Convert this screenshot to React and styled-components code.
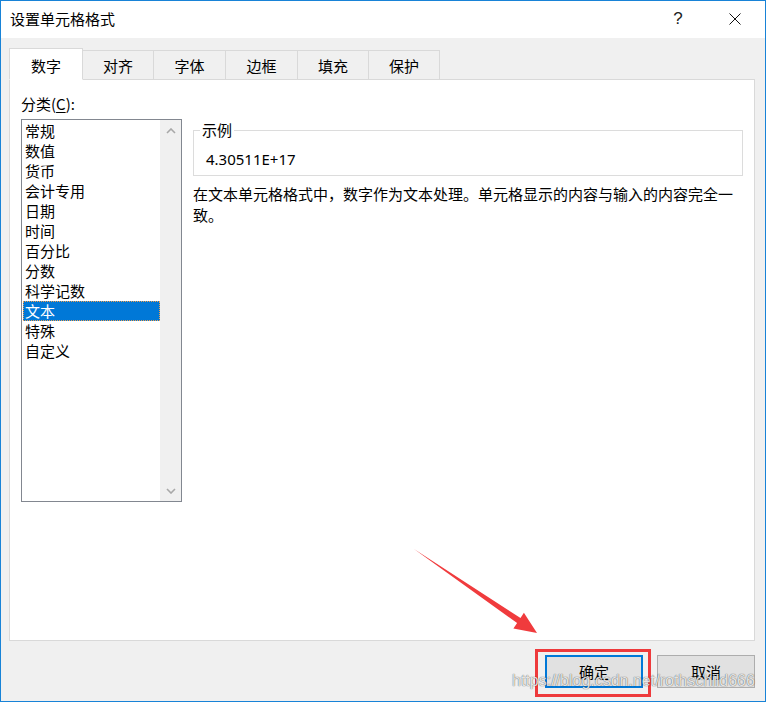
import React from 'react';
import styled, { createGlobalStyle } from 'styled-components';

const FONT = `"Noto Sans CJK SC", "Noto Sans", sans-serif`;
const LATIN_FONT = `"Noto Sans", "Noto Sans CJK SC", sans-serif`;

const GlobalStyle = createGlobalStyle`
  html, body { margin: 0; padding: 0; background: #fff; }
  body { font-family: ${FONT}; }
  * { box-sizing: border-box; }
`;

const Window = styled.div`
  position: relative;
  width: 766px;
  height: 702px;
  border: 1px solid #1883d7;
  background: #f0f0f0;
  display: flex;
  flex-direction: column;
  font-family: ${FONT};
  font-size: 15px;
  color: #000;
  overflow: hidden;
`;

const TitleBar = styled.div`
  height: 37px;
  flex: none;
  background: #fff;
  display: flex;
  align-items: center;
  padding: 0 7px 2px 9px;
`;

const Title = styled.div`
  flex: 1;
  line-height: 20px;
`;

const TitleButtons = styled.div`
  display: flex;
  gap: 11px;
  align-items: center;
`;

const TitleButton = styled.div`
  width: 46px;
  height: 30px;
  display: flex;
  align-items: center;
  justify-content: center;
  font-family: "Liberation Sans", sans-serif;
  font-size: 17px;
  color: #222;
`;

const Body = styled.div`
  flex: 1;
  display: flex;
  flex-direction: column;
  padding: 11px 10px 0 8px;
`;

const TabStrip = styled.div`
  display: flex;
  align-items: flex-end;
  height: 31px;
  margin-bottom: -1px;
  position: relative;
  z-index: 1;
`;

const Tab = styled.div`
  width: ${p => p.$w}px;
  height: ${p => (p.$active ? 32 : 30)}px;
  margin-left: ${p => (p.$first ? 0 : -1)}px;
  border: 1px solid #d9d9d9;
  border-bottom-color: ${p => (p.$active ? '#fff' : '#d9d9d9')};
  background: ${p => (p.$active ? '#fff' : '#f0f0f0')};
  display: flex;
  align-items: center;
  justify-content: center;
  line-height: 20px;
  padding-top: ${p => (p.$active ? 3 : 1)}px;
  position: relative;
  z-index: ${p => (p.$active ? 2 : 1)};
`;

const Panel = styled.div`
  height: 562px;
  flex: none;
  background: #fff;
  border: 1px solid #d9d9d9;
  padding: 14px 11px 0 11px;
  display: grid;
  grid-template-columns: 161px 1fr;
  column-gap: 11px;
  align-items: start;
`;

const LeftCol = styled.div`
  display: flex;
  flex-direction: column;
`;

const FieldLabel = styled.div`
  line-height: 20px;
  height: 20px;
  margin-bottom: 5px;
`;

const Mnemonic = styled.span`
  text-decoration: underline;
  text-underline-offset: 2px;
`;

const ListBox = styled.div`
  height: 383px;
  border: 1px solid #828790;
  display: flex;
`;

const Items = styled.div`
  flex: 1;
  display: flex;
  flex-direction: column;
  padding-top: 1px;
`;

const Item = styled.div`
  height: 20px;
  line-height: 20px;
  margin: 0 0 0 1px;
  padding-left: 2px;
  white-space: nowrap;
  background: ${p => (p.$selected ? '#0078d7' : 'transparent')};
  color: ${p => (p.$selected ? '#fff' : '#000')};
  outline: ${p => (p.$selected ? '1px dotted #f0a050' : 'none')};
  outline-offset: -1px;
`;

const ScrollTrack = styled.div`
  width: 21px;
  background: #f0f0f0;
  display: flex;
  flex-direction: column;
  justify-content: space-between;
  align-items: center;
  padding: 8px 0 7px;
`;

const RightCol = styled.div`
  padding-top: 26px;
  display: flex;
  flex-direction: column;
`;

const Sample = styled.fieldset`
  margin: 0;
  min-width: 0;
  border: 1px solid #dcdcdc;
  padding: 9px 12px 6px;
`;

const SampleLegend = styled.legend`
  margin-left: -6px;
  padding: 0 2px;
  line-height: 20px;
`;

const SampleValue = styled.div`
  font-family: ${LATIN_FONT};
  line-height: 20px;
`;

const Description = styled.p`
  margin: 7px 0 0;
  line-height: 21px;
`;

const Footer = styled.div`
  display: flex;
  justify-content: flex-end;
  gap: 14px;
  padding-top: 14px;
`;

const Button = styled.button`
  width: 98px;
  height: 33px;
  font-family: ${FONT};
  font-size: 15px;
  color: #000;
  background: #e1e1e1;
  border: ${p => (p.$primary ? '2px solid #0078d7' : '1px solid #adadad')};
  padding: 0;
  line-height: 20px;
`;

const Highlight = styled.span`
  position: relative;
  display: inline-flex;
  &::after {
    content: '';
    position: absolute;
    top: -6px;
    left: -10px;
    right: -8px;
    bottom: -9px;
    border: 3px solid #ee3a3c;
    pointer-events: none;
  }
`;

const Overlay = styled.svg`
  position: absolute;
  left: -1px;
  top: -1px;
  pointer-events: none;
`;

const Watermark = styled.div`
  position: absolute;
  left: 511px;
  top: 670px;
  font-family: "Liberation Sans", Arial, sans-serif;
  font-size: 16px;
  line-height: 20px;
  color: rgba(255, 255, 255, 0.85);
  text-shadow: 0 0 1px rgba(0, 0, 0, 0.45), 0 0 1px rgba(0, 0, 0, 0.45);
  pointer-events: none;
  white-space: nowrap;
`;

const tabs = [
  { label: '数字', w: 74 },
  { label: '对齐', w: 72 },
  { label: '字体', w: 73 },
  { label: '边框', w: 73 },
  { label: '填充', w: 72 },
  { label: '保护', w: 72 },
];

const categories = ['常规', '数值', '货币', '会计专用', '日期', '时间', '百分比', '分数', '科学记数', '文本', '特殊', '自定义'];

const Chevron = ({ up }) => (
  <svg width="10" height="6" viewBox="0 0 10 6">
    <polyline
      points={up ? '1,5 5,1 9,5' : '1,1 5,5 9,1'}
      fill="none"
      stroke="#a8a8a8"
      strokeWidth="1.6"
    />
  </svg>
);

export default function App() {
  return (
    <>
      <GlobalStyle />
      <Window>
        <TitleBar>
          <Title>设置单元格格式</Title>
          <TitleButtons>
            <TitleButton>?</TitleButton>
            <TitleButton>
              <svg width="12" height="12" viewBox="0 0 12 12">
                <path d="M0.5 0.5 L11.5 11.5 M11.5 0.5 L0.5 11.5" stroke="#111" strokeWidth="1" fill="none" />
              </svg>
            </TitleButton>
          </TitleButtons>
        </TitleBar>
        <Body>
          <TabStrip>
            {tabs.map((t, i) => (
              <Tab key={t.label} $w={t.w} $first={i === 0} $active={i === 0}>
                {t.label}
              </Tab>
            ))}
          </TabStrip>
          <Panel>
            <LeftCol>
              <FieldLabel>
                分类(<Mnemonic>C</Mnemonic>):
              </FieldLabel>
              <ListBox>
                <Items>
                  {categories.map(c => (
                    <Item key={c} $selected={c === '文本'}>{c}</Item>
                  ))}
                </Items>
                <ScrollTrack>
                  <Chevron up />
                  <Chevron />
                </ScrollTrack>
              </ListBox>
            </LeftCol>
            <RightCol>
              <Sample>
                <SampleLegend>示例</SampleLegend>
                <SampleValue>4.30511E+17</SampleValue>
              </Sample>
              <Description>
                在文本单元格格式中，数字作为文本处理。单元格显示的内容与输入的内容完全一致。
              </Description>
            </RightCol>
          </Panel>
          <Footer>
            <Highlight>
              <Button $primary>确定</Button>
            </Highlight>
            <Button>取消</Button>
          </Footer>
        </Body>
        <Overlay width="766" height="702" viewBox="0 0 766 702">
          <polygon
            points="414,549 520.5,618.1 523.9,612.8 537,633 513.4,628.4 517.1,623.1"
            fill="#f03b3d"
          />
        </Overlay>
        <Watermark>https://blog.csdn.net/rothschild666</Watermark>
      </Window>
    </>
  );
}
